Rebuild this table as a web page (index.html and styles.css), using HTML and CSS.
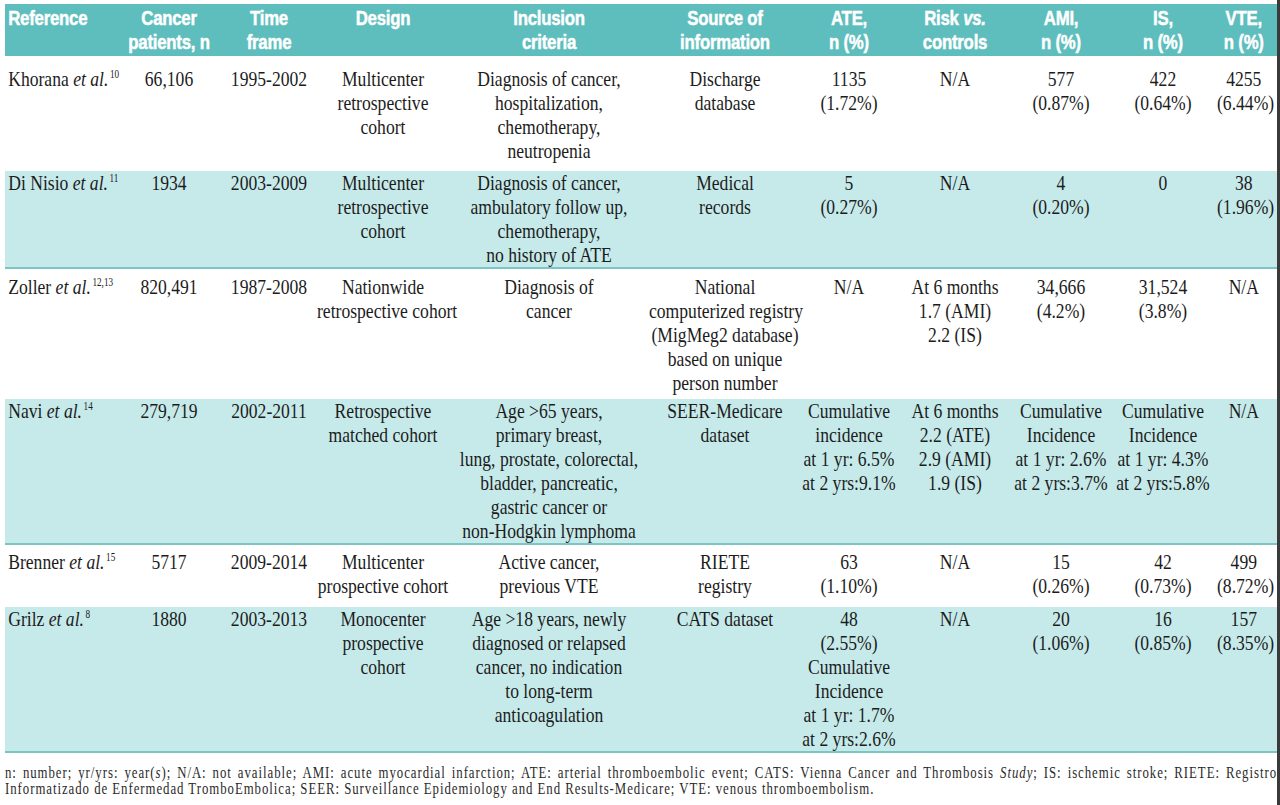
FILE: index.html
```html
<!DOCTYPE html>
<html lang="en">
<head>
<meta charset="utf-8">
<title>Arterial thromboembolism in cancer patients</title>
<link rel="stylesheet" href="styles.css">
</head>
<body>
<div class="frame">
  <div class="page">
    <table class="tbl">
      <colgroup>
        <col class="c1"><col class="c2"><col class="c3"><col class="c4"><col class="c5"><col class="c6">
        <col class="c7"><col class="c8"><col class="c9"><col class="c10"><col class="c11">
      </colgroup>
      <thead>
        <tr class="head">
          <th class="l">Reference</th>
          <th>Cancer<br>patients, n</th>
          <th>Time<br>frame</th>
          <th>Design</th>
          <th>Inclusion<br>criteria</th>
          <th>Source of<br>information</th>
          <th>ATE,<br>n (%)</th>
          <th>Risk <i>vs.</i><br>controls</th>
          <th>AMI,<br>n (%)</th>
          <th>IS,<br>n (%)</th>
          <th class="last">VTE,<br>n (%)</th>
        </tr>
      </thead>
      <tbody>
        <tr class="pa">
          <td class="l">Khorana <i>et al.</i><span class="sup">10</span></td>
          <td>66,106</td>
          <td>1995-2002</td>
          <td>Multicenter<br>retrospective<br>cohort</td>
          <td>Diagnosis of cancer,<br>hospitalization,<br>chemotherapy,<br>neutropenia</td>
          <td>Discharge<br>database</td>
          <td>1135<br>(1.72%)</td>
          <td>N/A</td>
          <td>577<br>(0.87%)</td>
          <td>422<br>(0.64%)</td>
          <td class="last">4255<br>(6.44%)</td>
        </tr>
        <tr class="alt">
          <td class="l">Di Nisio <i>et al.</i><span class="sup">11</span></td>
          <td>1934</td>
          <td>2003-2009</td>
          <td>Multicenter<br>retrospective<br>cohort</td>
          <td>Diagnosis of cancer,<br>ambulatory follow up,<br>chemotherapy,<br>no history of ATE</td>
          <td>Medical<br>records</td>
          <td>5<br>(0.27%)</td>
          <td>N/A</td>
          <td>4<br>(0.20%)</td>
          <td>0</td>
          <td class="last">38<br>(1.96%)</td>
        </tr>
        <tr class="pb">
          <td class="l">Zoller <i>et al.</i><span class="sup">12,13</span></td>
          <td>820,491</td>
          <td>1987-2008</td>
          <td>Nationwide<br>retrospective cohort</td>
          <td>Diagnosis of<br>cancer</td>
          <td>National<br>computerized registry<br>(MigMeg2 database)<br>based on unique<br>person number</td>
          <td>N/A</td>
          <td>At 6 months<br>1.7 (AMI)<br>2.2 (IS)</td>
          <td>34,666<br>(4.2%)</td>
          <td>31,524<br>(3.8%)</td>
          <td class="last">N/A</td>
        </tr>
        <tr class="alt">
          <td class="l">Navi <i>et al.</i><span class="sup">14</span></td>
          <td>279,719</td>
          <td>2002-2011</td>
          <td>Retrospective<br>matched cohort</td>
          <td>Age &gt;65 years,<br>primary breast,<br>lung, prostate, colorectal,<br>bladder, pancreatic,<br>gastric cancer or<br>non-Hodgkin lymphoma</td>
          <td>SEER-Medicare<br>dataset</td>
          <td>Cumulative<br>incidence<br>at 1 yr: 6.5%<br>at 2 yrs:9.1%</td>
          <td>At 6 months<br>2.2 (ATE)<br>2.9 (AMI)<br>1.9 (IS)</td>
          <td>Cumulative<br>Incidence<br>at 1 yr: 2.6%<br>at 2 yrs:3.7%</td>
          <td>Cumulative<br>Incidence<br>at 1 yr: 4.3%<br>at 2 yrs:5.8%</td>
          <td class="last">N/A</td>
        </tr>
        <tr class="pc">
          <td class="l">Brenner <i>et al.</i><span class="sup">15</span></td>
          <td>5717</td>
          <td>2009-2014</td>
          <td>Multicenter<br>prospective cohort</td>
          <td>Active cancer,<br>previous VTE</td>
          <td>RIETE<br>registry</td>
          <td>63<br>(1.10%)</td>
          <td>N/A</td>
          <td>15<br>(0.26%)</td>
          <td>42<br>(0.73%)</td>
          <td class="last">499<br>(8.72%)</td>
        </tr>
        <tr class="alt">
          <td class="l">Grilz <i>et al.</i><span class="sup">8</span></td>
          <td>1880</td>
          <td>2003-2013</td>
          <td>Monocenter<br>prospective<br>cohort</td>
          <td>Age &gt;18 years, newly<br>diagnosed or relapsed<br>cancer, no indication<br>to long-term<br>anticoagulation</td>
          <td>CATS dataset</td>
          <td>48<br>(2.55%)<br>Cumulative<br>Incidence<br>at 1 yr: 1.7%<br>at 2 yrs:2.6%</td>
          <td>N/A</td>
          <td>20<br>(1.06%)</td>
          <td>16<br>(0.85%)</td>
          <td class="last">157<br>(8.35%)</td>
        </tr>
      </tbody>
    </table>
    <div class="note">
      <div class="note-line just">n: number; yr/yrs: year(<i>s</i>); N/A: not available; AMI: acute myocardial infarction; ATE: arterial thromboembolic event; CATS: Vienna Cancer and Thrombosis <i>Study</i>; IS: ischemic stroke; RIETE: Registro</div>
      <div class="note-line">Informatizado de Enfermedad TromboEmbolica; SEER: Surveillance Epidemiology and End Results-Medicare; VTE: venous thromboembolism.</div>
    </div>
  </div>
</div>
</body>
</html>
```
FILE: styles.css
```css
html, body {
  margin: 0;
  padding: 0;
  background: #ffffff;
  overflow: hidden;
}

.frame {
  width: 1272px;
  height: 805px;
  padding-left: 5px;
  border-right: 3px solid #3a3a3a;
  overflow: hidden;
}

.page {
  width: 1590px;
  padding-top: 4px;
  transform: scaleX(0.8);
  transform-origin: 0 0;
  font-family: "Liberation Serif", "Times New Roman", serif;
  color: #1c1c1c;
}

.tbl {
  border-collapse: collapse;
  table-layout: fixed;
  width: 1590px;
}

.c1 { width: 140px; }
.c2 { width: 130px; }
.c3 { width: 120px; }
.c4 { width: 165px; }
.c5 { width: 250px; }
.c6 { width: 190px; }
.c7 { width: 120px; }
.c8 { width: 145px; }
.c9 { width: 120px; }
.c10 { width: 135px; }
.c11 { width: 75px; }

.tbl tr.head {
  background: #5ebdbd;
}

.tbl th {
  color: #ffffff;
  font-family: "Liberation Sans", Arial, sans-serif;
  font-weight: 700;
  font-size: 21px;
  line-height: 24px;
  letter-spacing: -0.3px;
  -webkit-text-stroke: 0.5px #ffffff;
  padding: 2px 0;
  vertical-align: top;
  text-align: center;
  white-space: nowrap;
}

.tbl th.l {
  text-align: left;
  padding-left: 4px;
}

.tbl td {
  font-size: 22px;
  line-height: 24px;
  vertical-align: top;
  text-align: center;
  white-space: nowrap;
  padding: 0;
}

.tbl td.l {
  text-align: left;
  padding-left: 4px;
}

.tbl th.last,
.tbl td.last {
  padding-right: 8px;
}

.tbl tr.alt {
  background: #c6eaea;
  border-bottom: 2px solid #7cc5c5;
}

.tbl tr.pa td {
  padding-top: 11px;
  padding-bottom: 8px;
}

.tbl tr.pb td {
  padding-top: 6px;
  padding-bottom: 4px;
}

.tbl tr.pc td {
  padding-top: 5px;
  padding-bottom: 9px;
}

.sup {
  font-size: 11.5px;
  line-height: 0;
  vertical-align: 8px;
  margin-left: 2px;
}

.note {
  width: 1590px;
  margin-top: 12px;
  font-size: 16px;
  line-height: 16px;
  letter-spacing: 1.2px;
  color: #2a2a2a;
}

.note-line {
  white-space: nowrap;
}

.note-line.just {
  white-space: normal;
  text-align: justify;
  text-align-last: justify;
}
```
